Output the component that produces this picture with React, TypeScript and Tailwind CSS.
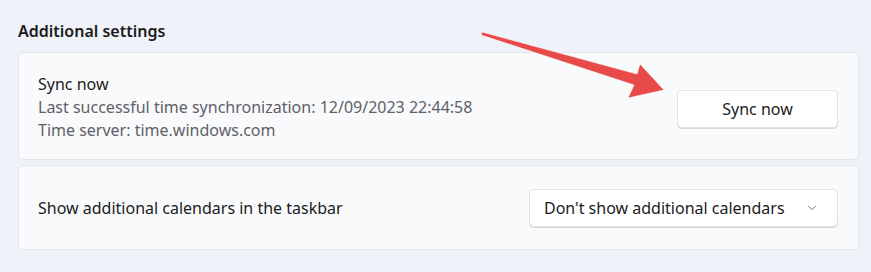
import { ChevronDown } from 'lucide-react';

const font = { fontFamily: '"Noto Sans", "Open Sans", sans-serif' };

function Arrow() {
  // red annotation arrow pointing at the Sync now button
  return (
    <svg
      className="pointer-events-none absolute left-0 top-0"
      width={871}
      height={272}
      viewBox="0 0 871 272"
    >
      <polygon
        points="482,32 637,74 640,64 664,90 628,98 634,85 481,35"
        fill="#e84a4a"
        stroke="#ffffff"
        strokeOpacity={0.6}
        strokeWidth={1}
        strokeLinejoin="round"
      />
    </svg>
  );
}

export default function App() {
  return (
    <div
      className="relative h-[272px] w-[871px] overflow-hidden bg-[#eff2f8] pl-[18px] pr-[12px] pt-[20px] text-[#1b1b1b]"
      style={font}
    >
      <h2 className="mb-[10px] text-[16px] font-semibold leading-[22px]">Additional settings</h2>

      <div className="flex flex-col gap-[5px]">
        {/* Sync card */}
        <div className="flex h-[108px] items-center justify-between rounded-[5px] border border-[#e4e6ea] bg-[#f9fafc] pl-[19px] pr-[20px]">
          <div className="flex flex-col pt-[2px]">
            <span className="text-[16px] leading-[23px]">Sync now</span>
            <span className="text-[16px] leading-[23px] text-[#5f6166]">
              Last successful time synchronization: 12/09/2023 22:44:58
            </span>
            <span className="text-[16px] leading-[23px] text-[#5f6166]">Time server: time.windows.com</span>
          </div>
          <button className="mt-[6px] h-[38px] w-[161px] rounded-[5px] border border-[#e2e3e6] bg-white text-[16px] shadow-[0_1px_0_#d6d7da]">
            Sync now
          </button>
        </div>

        {/* Calendars card */}
        <div className="flex h-[85px] items-center justify-between rounded-[5px] border border-[#e4e6ea] bg-[#f9fafc] pl-[19px] pr-[20px]">
          <span className="text-[16px]">Show additional calendars in the taskbar</span>
          <button className="flex h-[38px] w-[309px] items-center justify-between rounded-[5px] border border-[#e2e3e6] bg-white pl-[14px] pr-[18px] text-[16px] shadow-[0_1px_0_#d6d7da]">
            <span>Don't show additional calendars</span>
            <ChevronDown size={14} strokeWidth={1.5} className="text-[#5f6166]" />
          </button>
        </div>
      </div>

      <Arrow />
    </div>
  );
}
